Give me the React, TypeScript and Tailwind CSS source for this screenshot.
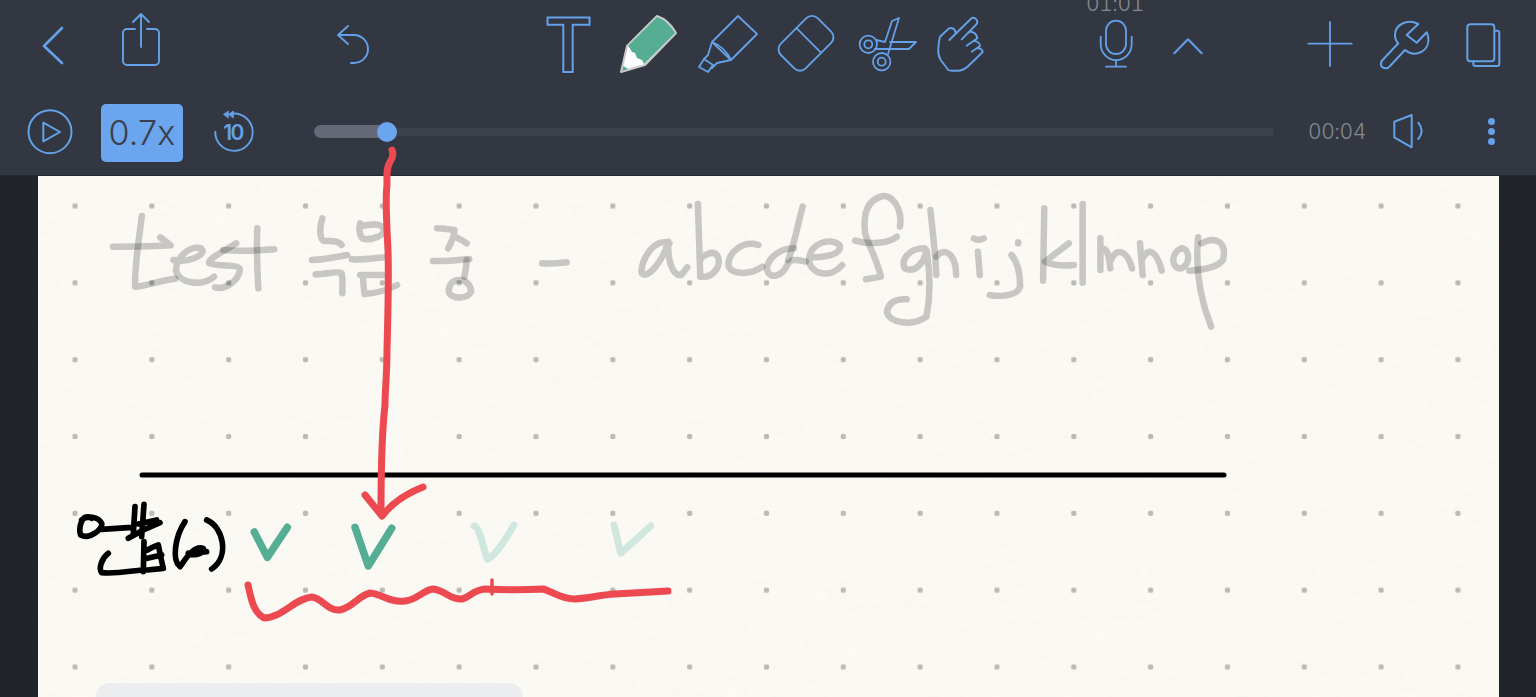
import type { ReactNode } from 'react';

const BLUE = '#64a1e8';

// svg cut from the page: viewBox uses page x and row y so paths read like the screenshot
const Ico = ({ x, w, top, className, children }: { x: number; w: number; top: number; className: string; children: ReactNode }) => (
  <svg
    width={w}
    height={88}
    viewBox={`${x} ${top} ${w} 88`}
    fill="none"
    stroke={BLUE}
    strokeWidth={2}
    strokeLinecap="round"
    strokeLinejoin="round"
    className={`shrink-0 ${className}`}
  >
    {children}
  </svg>
);

const TopBar = () => (
  <div className="flex h-[88px] items-center">
    <Ico x={40} w={26} top={0} className="ml-[40px]">
      <path d="M62 28 44 46 62 63" strokeWidth={2.6} />
    </Ico>
    <Ico x={120} w={42} top={0} className="ml-[54px]">
      <path d="M135 29h-8a4 4 0 0 0-4 4v28a4 4 0 0 0 4 4h28a4 4 0 0 0 4-4V33a4 4 0 0 0-4-4h-8M141 47V15M133 22l8-8 8 8" strokeWidth={1.9} />
    </Ico>
    <Ico x={335} w={37} top={0} className="ml-[173px]">
      <path d="M348 26 338 35 348 44M338 35H354A14 14 0 0 1 354 63H351" strokeWidth={1.9} />
    </Ico>
    <Ico x={545} w={47} top={0} className="ml-[173px]">
      <path d="M547.5 17.5H589.5V24.7H572.7V72H563.3V24.7H547.5Z" strokeLinejoin="miter" />
    </Ico>
    <Ico x={618} w={62} top={0} className="ml-[26px]">
      <path d="M657 16Q669 20 676 33L645 65 621 72 627 46Z" fill="#fff" stroke="#c9c9c9" />
      <path d="M657 17Q668 21 675 33L644 64 642 60 637 58 635 53 632 52 629 47 628 46Z" fill="#55ae94" stroke="none" />
      <path d="M622 71 623.500 66 628 69Z" fill="#55ae94" stroke="none" />
    </Ico>
    <Ico x={696} w={64} top={0} className="ml-[16px]">
      <path d="M738 16 757 34 731 60 712 42ZM712 42Q725 47 731 60M712 42 708 55 704 59M731 60 717 63 712 68M704 59 713 65 708 72 699 67Z" strokeWidth={1.8} />
    </Ico>
    <Ico x={776} w={60} top={0} className="ml-[16px]">
      <g transform="translate(806 43.300) rotate(-45)">
        <rect x={-26} y={-17.500} width={52} height={35} rx={8} strokeWidth={1.9} />
        <path d="M4 -17.500V17.500" strokeWidth={1.8} />
      </g>
    </Ico>
    <Ico x={856} w={64} top={0} className="ml-[20px]">
      <g strokeWidth={1.8}>
        <circle cx={868.3} cy={44.3} r={8.7} />
        <circle cx={868.3} cy={44.3} r={4} />
        <circle cx={881.7} cy={61.7} r={8.7} />
        <circle cx={881.7} cy={61.7} r={4} />
        <path d="M876 40 885 42 892 21 899 18 888 54M890 42H916L909 49H875" />
      </g>
    </Ico>
    <Ico x={936} w={50} top={0} className="ml-[16px]">
      <path
        d="M949.300 40 970.700 19C974 16 979 20 976.700 24L961.700 39.300M968.300 32.700C971 30.500 977 33 977.300 38.300L966.700 45.700M974 41C977 41 980 43 980 46L971.700 51.700M977.300 48.300C980 48 983 50 982.700 52L968.300 66C964 70 960 71 956.700 70.700 952 71 950 71 948.300 70L940.700 60C938.500 56 938 52 938.300 49 938.500 43 939 40 940 36.700L948.300 29C951 27 955 28 955.700 33"
        strokeWidth={1.9}
      />
    </Ico>
    <div className="relative ml-[112px]">
      <span className="absolute left-[-12px] top-[-9px] font-['Inter',sans-serif] text-[21px] leading-[25px] font-light tabular-nums tracking-[-0.4px] text-[#858a90]">01:01</span>
      <Ico x={1098} w={36} top={0} className="">
        <rect x={1106} y={20.700} width={20} height={33.300} rx={10} strokeWidth={1.8} />
        <path d="M1100.700 36.700V44A15.300 16 0 0 0 1131.700 44V36.700M1116 60V66.700M1106 66.700H1126" strokeWidth={1.8} />
      </Ico>
    </div>
    <Ico x={1172} w={32} top={0} className="ml-[38px]">
      <path d="M1174.300 53.300 1188 39.300 1201.700 53.300" />
    </Ico>
    <Ico x={1306} w={48} top={0} className="ml-[102px]">
      <path d="M1308.300 43.700H1351.700M1330 22V66" strokeWidth={1.8} />
    </Ico>
    <Ico x={1378} w={54} top={0} className="ml-[24px]">
      <path d="M1418.300 24C1407 18 1395 25 1395 35 1395 38 1396 41 1398.300 43.300L1383.300 59.300C1379 63 1381 68 1385 68.300 1387 68.500 1389 67.500 1390 66L1405 50C1416 59 1430 50 1428.300 38 1428 36 1427.500 34 1426.700 32.300L1416.700 42.700 1406.700 35Z" />
    </Ico>
    <Ico x={1464} w={38} top={0} className="ml-[32px]">
      <rect x={1467.300} y={24.300} width={27} height={37} rx={3} />
      <path d="M1495 30.700H1497.300A2 2 0 0 1 1499.300 32.700V64A2 2 0 0 1 1497.300 66H1475.300A2 2 0 0 1 1473.300 64V61.300" />
    </Ico>
  </div>
);

const PlayerBar = () => (
  <div className="flex h-[87px] items-center">
    <Ico x={26} w={48} top={88} className="ml-[26px]">
      <circle cx={50} cy={131.700} r={21.500} strokeWidth={2} />
      <path d="M43.300 122.700 60 132 43.300 141.300Z" strokeWidth={2} />
    </Ico>
    <div className="ml-[27px] mt-[2px] flex h-[58px] w-[82px] shrink-0 items-center justify-center rounded-[5px] bg-[#6aa5ee] font-['Inter',sans-serif] text-[34px] font-light tracking-[0.2px] text-[#3a3f49]">
      0.7x
    </div>
    <Ico x={212} w={44} top={88} className="ml-[29px]">
      <path d="M215.300 131.700A18.700 18.700 0 1 0 233.500 113.500" strokeWidth={1.9} />
      <path d="M223.700 114.300 228.300 111V117.700ZM228.700 114.300 233.300 111V117.700Z" fill={BLUE} strokeWidth={0.8} />
      <text x={233} y={140} textAnchor="middle" fill={BLUE} stroke="none" fontFamily="Inter, sans-serif" fontSize={21} fontWeight={600} letterSpacing={-1.500}>10</text>
    </Ico>
    <div className="relative ml-[58px] flex h-[24px] w-[960px] shrink-0 items-center">
      <div className="h-[13px] w-[73px] rounded-l-full bg-[#636976]" />
      <div className="h-[8px] flex-1 rounded-r-[2px] bg-[#3c414b]" />
      <div className="absolute left-[63px] top-[2px] size-[20px] rounded-full bg-[#6aa5ee]" />
    </div>
    <span className="ml-[34px] w-[58px] shrink-0 font-['Inter',sans-serif] text-[21px] font-light tabular-nums tracking-[-0.4px] text-[#858a90]">00:04</span>
    <Ico x={1392} w={36} top={88} className="ml-[26px]">
      <path d="M1394.300 121.700 1411.700 115V147.300L1394.300 137.300Z" />
      <path d="M1418.300 122.700Q1425 131 1418.300 139" />
    </Ico>
    <div className="ml-[56px] flex w-[14px] shrink-0 flex-col items-center gap-[3px]">
      <div className="size-[7px] rounded-full bg-[#64a1e8]" />
      <div className="size-[7px] rounded-full bg-[#64a1e8]" />
      <div className="size-[7px] rounded-full bg-[#64a1e8]" />
    </div>
  </div>
);

// one pen stroke, kept separate so crossings darken like marker ink
const Pen = ({ d }: { d: string }) => <path d={d} vectorEffect="non-scaling-stroke" />;

const Ink = () => (
  <svg
    width={1536}
    height={697}
    viewBox="0 0 1536 697"
    fill="none"
    strokeLinecap="round"
    strokeLinejoin="round"
    className="pointer-events-none absolute left-0 top-0"
  >
    {/* faded handwriting, left half */}
    <g transform="translate(90 180) scale(0.37 0.3333)" stroke="#000" strokeOpacity={0.2} strokeWidth={6.500}>
      <Pen d="M140 108C135 160 120 250 122 320 150 320 190 300 230 296" />
      <Pen d="M62 200C110 200 170 200 218 196L190 172" />
      <Pen d="M225 240C260 250 320 225 300 205 270 195 235 230 232 270 240 310 300 322 335 290" />
      <Pen d="M395 190C360 215 320 235 322 250 350 262 405 250 405 270 400 305 365 330 338 322" />
      <Pen d="M452 145C450 210 452 270 455 325" />
      <Pen d="M360 210C400 215 450 212 498 208" />
      <Pen d="M628 115C620 140 620 170 630 182 650 185 670 180 680 195" />
      <Pen d="M600 240C630 238 665 232 695 225" />
      <Pen d="M610 283C640 282 670 272 680 280 684 300 682 320 682 340" />
      <Pen d="M730 130C725 150 730 178 745 178 770 178 795 165 795 150 790 130 760 130 730 140" />
      <Pen d="M708 238C740 240 770 234 800 232" />
      <Pen d="M730 285C760 285 785 285 800 285M738 285C738 305 740 325 742 342M742 342C770 340 805 330 830 315" />
      <Pen d="M938 145C955 145 970 148 985 150 985 170 975 190 968 205M985 170C995 175 1008 182 1018 190" />
      <Pen d="M927 243C960 245 995 240 1025 237" />
      <Pen d="M1018 240C1018 258 1014 275 1012 290" />
      <Pen d="M1000 300C975 300 968 320 970 338 980 358 1020 358 1030 335 1030 315 1015 300 1000 300" />
      <Pen d="M1222 250C1245 252 1265 250 1288 247" />
    </g>
    {/* faded handwriting, right half */}
    <g transform="translate(620 180) scale(0.3954 0.3333)" stroke="#000" strokeOpacity={0.2} strokeWidth={6.500}>
      <Pen d="M125 190C90 170 50 240 55 280 70 300 110 240 122 185 120 230 130 290 155 285L170 262" />
      <Pen d="M197 72 203 290C240 295 260 250 245 225 235 210 210 225 203 240" />
      <Pen d="M350 195C310 180 270 220 275 260 285 285 330 285 360 260" />
      <Pen d="M462 80C450 130 440 200 425 240" />
      <Pen d="M440 205C400 205 370 240 372 270 380 300 410 290 425 250 435 235 450 240 470 245" />
      <Pen d="M480 230C510 235 565 225 555 195 530 170 480 190 478 240 480 280 530 300 562 255" />
      <Pen d="M708 140C715 90 690 45 665 48 620 60 615 110 620 160 630 200 650 240 660 290L622 298" />
      <Pen d="M595 182C630 195 680 190 700 170" />
      <Pen d="M770 205C730 205 710 240 720 265 745 280 770 250 775 210 785 280 785 350 775 410 740 440 680 430 675 395 680 365 700 355 725 358" />
      <Pen d="M785 90C790 150 798 220 800 285" />
      <Pen d="M800 230C820 200 850 220 850 285" />
      <Pen d="M895 175C905 182 912 180 920 175" />
      <Pen d="M905 215 910 285" />
      <Pen d="M1007 187V190" />
      <Pen d="M990 225C1005 245 1012 280 1012 320 1005 345 970 352 935 345" />
      <Pen d="M1073 85 1070 302" />
      <Pen d="M1135 190 1075 245C1100 258 1125 258 1148 255" />
      <Pen d="M1170 72V308" />
      <Pen d="M1215 175V270M1215 210C1225 200 1235 205 1240 265M1242 240C1255 205 1280 205 1295 265" />
      <Pen d="M1315 190 1322 285M1322 235C1335 205 1355 205 1370 272" />
      <Pen d="M1420 205C1390 220 1395 270 1420 265 1445 250 1440 205 1420 205" />
      <Pen d="M1462 172C1455 260 1465 350 1495 440" />
      <Pen d="M1470 190C1510 165 1535 190 1525 240 1510 265 1470 270 1440 272" />
    </g>

    <path d="M142 475H1224" stroke="#000" strokeWidth={5} />

    {/* black note */}
    <g transform="translate(60 470) scale(0.3333)" stroke="#000" strokeWidth={17}>
      <path d="M95 145C65 125 55 175 62 195 90 210 130 175 125 160 115 140 80 135 65 150M125 178 215 172M225 110 220 190M252 103 245 200M205 205 250 180 300 158M235 162 290 150" />
      <path d="M145 250C125 265 115 295 125 308 160 312 200 305 245 300M252 215 250 305M262 240C275 232 285 228 295 225 300 250 305 275 310 295L262 300M262 265 305 255" />
      <path d="M375 155C345 200 335 270 360 290 375 270 400 225 430 235 435 250 400 260 385 250M385 250 440 245M440 150C490 170 510 260 455 297" />
    </g>

    {/* checks */}
    <g stroke="#55ae94" strokeWidth={7.500}>
      <path d="M254.300 532 267.300 557.300 287.300 527.300" />
      <path d="M355 527.300 368.300 566 391.700 528.300" />
    </g>
    <g stroke="#cfe7de" strokeWidth={7}>
      <path d="M474 526C480 527 483 548 487.300 559.300 498 553 506 538 514 525" />
      <path d="M614 525 620.700 553.300 650.700 526" />
    </g>

    {/* red pen */}
    <g stroke="#ec4a50" strokeWidth={7}>
      <path d="M392 150C394 155 393 158 390 162 386 168 387 175 387 185 385 200 387 230 388 250 389 280 388 310 387 350 387 375 385 390 385 405 381 440 381 480 381 512" />
      <path d="M365 495 382 516C392 503 405 494 423 487" />
      <path d="M248 585C251 598 253 612 264 618 282 618 295 598 312 597 322 598 327 611 340 610 353 607 358 596 370 593 382 594 390 603 405 601 417 600 423 590 433 589 445 590 450 600 462 599 470 597 473 590 485 589 505 590 525 590 543 589 552 591 560 599 575 599 590 598 600 595 615 594L668 591" />
      <path d="M492 580V594" strokeWidth={3.500} />
    </g>
  </svg>
);

export default function App() {
  return (
    <div className="relative flex h-[697px] w-[1536px] flex-col overflow-hidden bg-[#21252b]">
      <div className="shrink-0 bg-[#323741]">
        <TopBar />
        <PlayerBar />
        <div className="h-px bg-[#262a30]" />
      </div>
      <div className="relative ml-[38px] w-[1461px] flex-1 overflow-hidden bg-[#fbfaf5] bg-[radial-gradient(circle,#bcbbb6_2.600px,transparent_3.100px)] bg-[size:76.83px_76.83px] bg-[position:-1.400px_-8.400px] pl-[58px] pt-[507px]">
        {/* paper grain */}
        <svg width={1461} height={521} className="absolute left-0 top-0 opacity-[0.04]">
          <filter id="grain">
            <feTurbulence type="fractalNoise" baseFrequency="0.09 0.18" numOctaves={4} />
            <feColorMatrix values="0 0 0 0 0.4 0 0 0 0 0.4 0 0 0 0 0.35 0.9 0.9 0 0 -0.5" />
          </filter>
          <rect width={1461} height={521} filter="url(#grain)" />
        </svg>
        <div className="relative h-[40px] w-[427px] rounded-t-[14px] bg-[#ecedee]" />
      </div>
      <Ink />
    </div>
  );
}
